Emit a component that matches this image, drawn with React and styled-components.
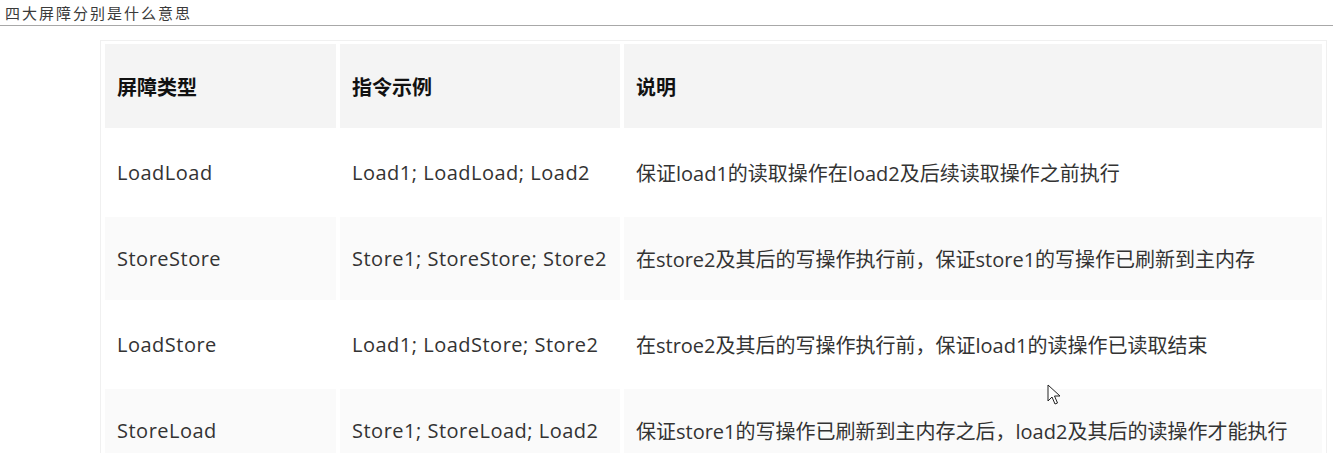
import styled, { createGlobalStyle } from "styled-components";

const GlobalStyle = createGlobalStyle`
  body {
    margin: 0;
    background: #ffffff;
    font-family: "Open Sans", "Noto Sans CJK SC", sans-serif;
  }
`;

const Page = styled.div`
  position: relative;
  width: 1333px;
  height: 453px;
  overflow: hidden;
  background: #fff;
`;

const TitleBar = styled.div`
  height: 25px;
  border-bottom: 1px solid #a8a8a8;
  padding-left: 5px;
  display: flex;
  align-items: center;
  font-family: "Noto Sans CJK SC", serif;
  font-size: 15px;
  letter-spacing: 2px;
  color: #3a3a3a;
`;

const Content = styled.div`
  padding: 14px 0 0 100px;
`;

const Table = styled.table`
  border-collapse: separate;
  border-spacing: 4px 3px;
  border: 1px solid #f0f0f0;
  width: 1227px;
  table-layout: fixed;
`;

const HeadCell = styled.th`
  background: #f4f4f4;
  height: 84px;
  padding: 0 12px;
  text-align: left;
  font-family: "Noto Sans CJK SC", sans-serif;
  font-weight: 700;
  font-size: 20px;
  color: #111;
`;

const Row = styled.tr`
  background: ${(p) => (p.$striped ? "#fafafa" : "#ffffff")};
`;

const Cell = styled.td`
  height: 83px;
  padding: 0 12px;
  font-size: 20px;
  letter-spacing: ${(p) => (p.$code ? "0.5px" : "0")};
  color: #333;
  white-space: nowrap;
`;

const Cursor = styled.svg`
  position: absolute;
  left: 1047px;
  top: 384px;
`;

const rows = [
  ["LoadLoad", "Load1; LoadLoad; Load2", "保证load1的读取操作在load2及后续读取操作之前执行"],
  ["StoreStore", "Store1; StoreStore; Store2", "在store2及其后的写操作执行前，保证store1的写操作已刷新到主内存"],
  ["LoadStore", "Load1; LoadStore; Store2", "在stroe2及其后的写操作执行前，保证load1的读操作已读取结束"],
  ["StoreLoad", "Store1; StoreLoad; Load2", "保证store1的写操作已刷新到主内存之后，load2及其后的读操作才能执行"],
];

const App = () => {
  return (
    <Page>
      <GlobalStyle />
      <TitleBar>四大屏障分别是什么意思</TitleBar>
      <Content>
        <Table>
          <colgroup>
            <col style={{ width: 231 }} />
            <col style={{ width: 280 }} />
            <col />
          </colgroup>
          <thead>
            <tr>
              <HeadCell>屏障类型</HeadCell>
              <HeadCell>指令示例</HeadCell>
              <HeadCell>说明</HeadCell>
            </tr>
          </thead>
          <tbody>
            {rows.map((r, i) => (
              <Row key={i} $striped={i % 2 === 1}>
                <Cell $code>{r[0]}</Cell>
                <Cell $code>{r[1]}</Cell>
                <Cell>{r[2]}</Cell>
              </Row>
            ))}
          </tbody>
        </Table>
      </Content>
      <Cursor width="14" height="22" viewBox="0 0 14 22">
        <path
          d="M1 1 L1 17 L5 13 L8 20 L10.5 19 L7.5 12 L13 12 Z"
          fill="#fff"
          stroke="#222"
          strokeWidth="1"
          strokeLinejoin="round"
        />
      </Cursor>
    </Page>
  );
};

export default App;
